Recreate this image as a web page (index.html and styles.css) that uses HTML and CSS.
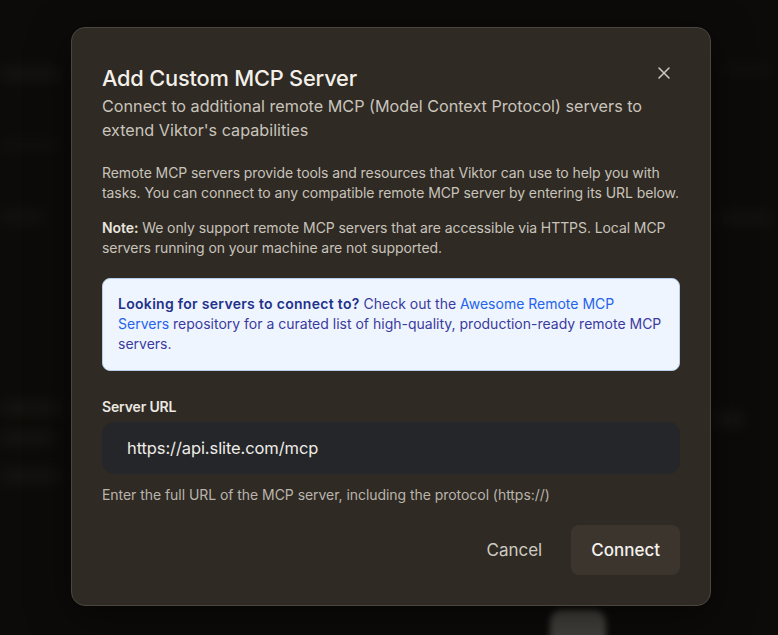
FILE: index.html
```html
<!DOCTYPE html>
<html lang="en">
<head>
<meta charset="utf-8">
<title>Add Custom MCP Server</title>
<link rel="stylesheet" href="styles.css">
</head>
<body>
<div class="backdrop" aria-hidden="true">
  <div class="ghost g1"></div>
  <div class="ghost g2"></div>
  <div class="ghost g3"></div>
  <div class="ghost g4"></div>
  <div class="ghost g5"></div>
  <div class="ghost g6"></div>
  <div class="ghost g7"></div>
  <div class="ghost g8"></div>
  <div class="ghost g9"></div>
  <div class="ghost avatar"></div>
</div>
<div class="dialog" role="dialog">
  <header class="dialog-head">
    <div class="titles">
      <h2 class="title">Add Custom MCP Server</h2>
      <p class="subtitle">Connect to additional remote MCP (Model Context Protocol) servers to extend Viktor's capabilities</p>
    </div>
    <button class="close" aria-label="Close">
      <svg width="12" height="12" viewBox="0 0 12 12"><path d="M1 1L11 11M11 1L1 11" stroke="#cfcbc4" stroke-width="1.5" stroke-linecap="round"/></svg>
    </button>
  </header>
  <p class="body-text">Remote MCP servers provide tools and resources that Viktor can use to help you with tasks. You can connect to any compatible remote MCP server by entering its URL below.</p>
  <p class="body-text"><strong>Note:</strong> We only support remote MCP servers that are accessible via HTTPS. Local MCP servers running on your machine are not supported.</p>
  <div class="info">
    <strong>Looking for servers to connect to?</strong> Check out the <a href="#">Awesome Remote MCP Servers</a> repository for a curated list of high-quality, production-ready remote MCP servers.
  </div>
  <label class="label">Server URL</label>
  <div class="input">https://api.slite.com/mcp</div>
  <p class="help">Enter the full URL of the MCP server, including the protocol (https://)</p>
  <div class="actions">
    <button class="btn cancel">Cancel</button>
    <button class="btn connect">Connect</button>
  </div>
</div>
</body>
</html>
```
FILE: styles.css
```css
* { box-sizing: border-box; }
html, body { margin: 0; height: 100%; }
body {
  background: #0c0b09;
  font-family: Inter, "Noto Sans", sans-serif;
  padding: 27px 0 0 71px;
  overflow: hidden;
  position: relative;
}
.backdrop { position: absolute; inset: 0; }
.ghost { position: absolute; background: #24221f; filter: blur(7px); border-radius: 6px; opacity: .45; }
.g1 { left: 0; top: 68px; width: 60px; height: 12px; }
.g2 { left: 0; top: 140px; width: 60px; height: 10px; opacity: .25; }
.g3 { left: 0; top: 210px; width: 45px; height: 14px; opacity: .3; }
.g4 { left: 0; top: 402px; width: 60px; height: 12px; }
.g5 { left: 0; top: 432px; width: 55px; height: 12px; }
.g6 { left: 0; top: 470px; width: 60px; height: 12px; }
.g7 { left: 718px; top: 212px; width: 55px; height: 12px; opacity: .35; }
.g8 { left: 714px; top: 412px; width: 30px; height: 14px; }
.g9 { left: 722px; top: 64px; width: 50px; height: 10px; opacity: .25; }
.avatar { left: 550px; top: 610px; width: 56px; height: 40px; background: #5a5752; border-radius: 12px; filter: blur(3px); opacity: .7; }

.dialog {
  position: relative;
  width: 640px;
  background: #2f2a23;
  border: 1px solid #4a463f;
  border-radius: 14px;
  padding: 30px 30px 30px;
  box-shadow: 0 10px 40px rgba(0,0,0,.5);
}
.dialog-head { display: flex; justify-content: space-between; align-items: flex-start; }
.titles { flex: 1; }
.title {
  margin: 6px 0 0;
  font-size: 21.8px;
  line-height: 28px;
  font-weight: 500;
  color: #f3f0ea;
  letter-spacing: -0.2px;
}
.subtitle {
  margin: 2px 0 0;
  font-size: 16.2px;
  line-height: 24px;
  color: #c9c4bc;
  letter-spacing: 0;
}
.close {
  background: none; border: 0; padding: 0; margin: 6px 7px 0 0;
  width: 18px; height: 18px; display: flex; align-items: center; justify-content: center; cursor: pointer;
}
.body-text {
  margin: 21px 0 0;
  font-size: 14px;
  line-height: 20px;
  color: #c8c3bb;
  letter-spacing: -0.08px;
}
.body-text + .body-text { margin-top: 15px; }
.body-text strong { color: #e8e4de; font-weight: 600; }
.info {
  margin-top: 20px;
  background: #eef5ff;
  border: 1px solid #b8cdea;
  border-radius: 8px;
  padding: 15px 17px 16px 15px;
  font-size: 14px;
  line-height: 20px;
  color: #3b3a9e;
  letter-spacing: 0;
}
.info strong { color: #22318a; font-weight: 600; letter-spacing: 0.3px; }
.info a { color: #2563eb; text-decoration: none; }
.label {
  display: block;
  margin-top: 26px;
  font-size: 14px;
  line-height: 20px;
  font-weight: 600;
  color: #ece8e2;
  letter-spacing: -0.15px;
}
.input {
  margin-top: 5px;
  height: 52px;
  background: #25262a;
  border-radius: 12px;
  padding: 0 25px;
  display: flex; align-items: center;
  font-size: 16.5px;
  color: #efece6;
  letter-spacing: -0.1px;
}
.help {
  margin: 11px 0 0;
  font-size: 14px;
  line-height: 20px;
  color: #b9b4ac;
  letter-spacing: -0.05px;
}
.actions { display: flex; justify-content: flex-end; gap: 9px; margin-top: 20px; }
.btn {
  font-family: inherit;
  font-size: 17px;
  border: 0;
  border-radius: 8px;
  height: 50px;
  padding: 0 20px;
  cursor: pointer;
}
.cancel { background: transparent; color: #cfcac2; }
.connect { background: #3b352e; color: #f5f2ee; font-weight: 500; }
```
